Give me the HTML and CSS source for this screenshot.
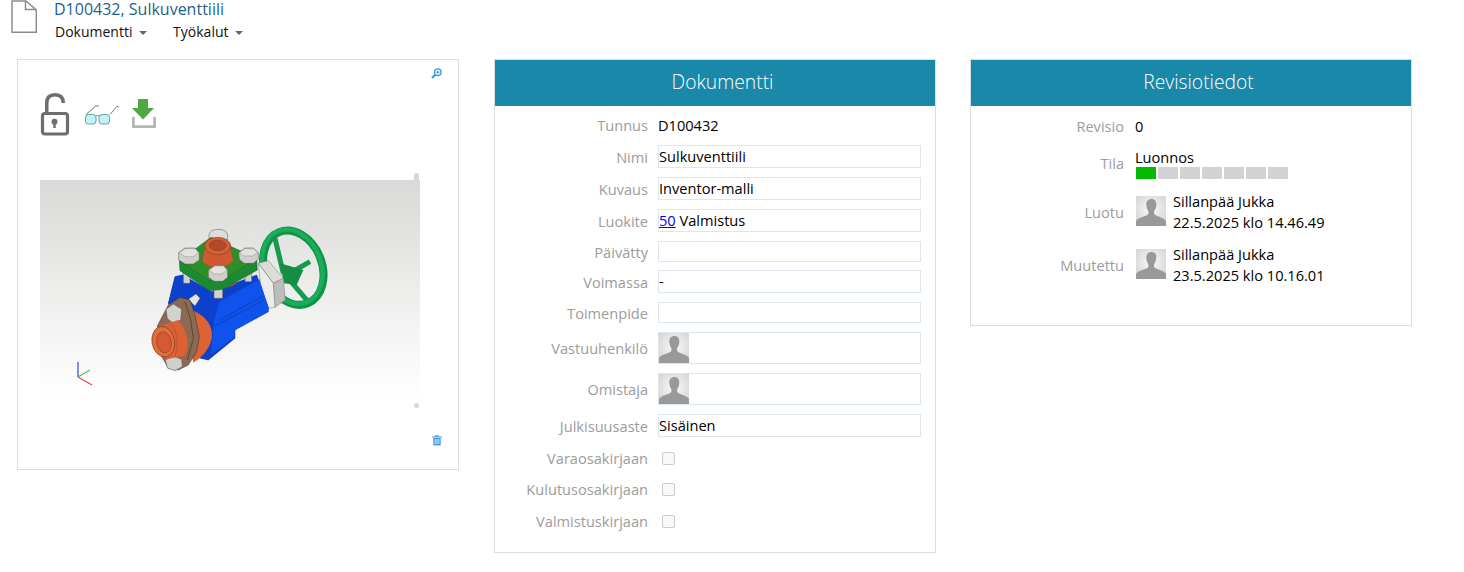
FILE: index.html
```html
<!DOCTYPE html>
<html lang="en">
<head>
  <meta charset="UTF-8" />
  <title>D100432, Sulkuventtiili</title>
  <link rel="stylesheet" href="styles.css">
</head>
<body>

  <svg class="defs">
    <defs>
      <radialGradient id="avatarBg" cx="50%" cy="45%" r="70%">
        <stop offset="0" stop-color="#fafafa"/>
        <stop offset="1" stop-color="#d2d2d2"/>
      </radialGradient>
      <symbol id="avatar" viewBox="0 0 30 30">
        <rect width="30" height="30" fill="url(#avatarBg)"/>
        <path d="M15.500 3c-3.500 0-5.500 2.500-5.200 6 .2 2.500 1 4.500 1.900 6 .5 1 .4 3-.5 3.800-2 1.600-9.700 2.700-11.700 6.200v5h30v-5c-2-3.400-9.200-4.600-11.200-6.200-.9-.8-1-2.800-.5-3.800 1-1.500 1.800-3.500 2-6 .2-3.500-1.300-6-4.800-6z" fill="#999"/>
      </symbol>
    </defs>
  </svg>

  <!-- Header -->
  <div class="page-head">
    <svg class="doc-icon" width="26" height="34" viewBox="0 0 26 34">
      <path d="M1 1v31.300h24.300V10L15 1zM14.500 1v8.500h10.800" fill="#fff" stroke="#8c8c8c" stroke-width="1.500"/>
    </svg>
    <div class="head-text">
      <div class="doc-title">D100432, Sulkuventtiili</div>
      <div class="menu">
        <span class="menu-item">Dokumentti <i class="caret"></i></span>
        <span class="menu-item">Työkalut <i class="caret"></i></span>
      </div>
    </div>
  </div>

  <div class="columns">

    <!-- Preview -->
    <div class="card preview-card">
      <svg class="zoom-icon" width="11" height="11" viewBox="0 0 11 11">
        <circle cx="6.800" cy="4.200" r="3.300" fill="none" stroke="#3f97e0" stroke-width="1.400"/>
        <path d="M4.500 6.500 1 10" stroke="#3f97e0" stroke-width="2.200"/>
        <path d="M5 4.200h3.600M6.800 2.400V6" stroke="#3f97e0" stroke-width="1"/>
      </svg>

      <div class="tools">
        <svg class="lock" width="30" height="43" viewBox="0 0 30 43">
          <path d="M6.750 20V10C6.750 4.500 10 1.750 15 1.750S23.250 4.500 23.250 10" fill="none" stroke="#6e6e6e" stroke-width="3.500"/>
          <rect x="2.500" y="20.500" width="25" height="20.500" rx="2.500" fill="none" stroke="#6e6e6e" stroke-width="3.200"/>
          <circle cx="14.500" cy="28.700" r="3" fill="#6e6e6e"/>
          <path d="M13.300 29h2.400v6h-2.400z" fill="#6e6e6e"/>
        </svg>
        <svg class="glasses" width="36" height="20" viewBox="0 0 36 20">
          <rect x=".5" y="9.500" width="10.500" height="9.500" rx="3" fill="#bff3f8" stroke="#4a8f90" stroke-width=".8"/>
          <rect x="14" y="9.500" width="10.500" height="9.500" rx="3" fill="#bff3f8" stroke="#4a8f90" stroke-width=".8"/>
          <path d="M11 11q1.500-1 3 0M1 9.500 11 .8l3 .2M25 9.500 32 1.300l2 .7" fill="none" stroke="#555" stroke-width=".8"/>
        </svg>
        <svg class="download" width="24" height="30" viewBox="0 0 24 30">
          <path d="M1.300 18v9.700h21.400V18" fill="none" stroke="#b5b5b5" stroke-width="2.800"/>
          <path d="M6 0h10v9h6L11 20.500 0 9h6z" fill="#4ea942"/>
        </svg>
      </div>

      <div class="model">
        <svg width="380" height="220" viewBox="0 0 380 220">
          <defs>
            <linearGradient id="modelBg" x1="0" y1="0" x2="0" y2="1">
              <stop offset="0" stop-color="#d8dad7"/>
              <stop offset=".55" stop-color="#efefee"/>
              <stop offset="1" stop-color="#fff"/>
            </linearGradient>
            <filter id="soft"><feGaussianBlur stdDeviation=".5"/></filter>
          </defs>
          <rect width="380" height="220" fill="url(#modelBg)"/>

          <g filter="url(#soft)">
            <g transform="translate(100 40) scale(.3333)">
              <!-- hand wheel -->
              <path d="M405 55 430 160M510 125 440 165M500 240 440 170" stroke="#169a4e" stroke-width="15" fill="none"/>
              <ellipse cx="460" cy="143" rx="86" ry="115" transform="rotate(-22 460 143)" fill="none" stroke="#0d9447" stroke-width="24"/>
              <ellipse cx="457" cy="140" rx="86" ry="115" transform="rotate(-22 457 140)" fill="none" stroke="#1cab5a" stroke-width="13"/>
              <path d="M420 130 490 150 470 195 432 190z" fill="#128c45"/>
              <!-- packing nut -->
              <path d="M355 130 385 122 430 175 400 190z" fill="#dcdcd9" stroke="#777" stroke-width="1.500"/>
              <path d="M400 190 430 175 436 240 405 262z" fill="#bdbdba" stroke="#777" stroke-width="1.500"/>
              <path d="M355 130 400 190 405 262 385 265 365 225z" fill="#ececea" stroke="#777" stroke-width="1.500"/>
              <!-- body -->
              <path d="M105 170 128 165 215 215 350 165 385 262 385 275 285 330 285 355 205 420 170 412 85 250z" fill="#0a3fc8" stroke="#0a2c90" stroke-width="1.500"/>
              <path d="M238 245 358 178 385 262 385 275 285 330 283 352 212 405 222 300z" fill="#0c52ec"/>
              <path d="M105 170 128 165 215 215 238 245 222 300 212 405 205 420 170 412 85 250z" fill="#0a40cc"/>
              <path d="M225 318 372 240M240 300 368 228" stroke="#07308f" stroke-width="1.500"/>
              <!-- bolt shanks -->
              <path d="M130 155h20v35h-20zM315 150h20v35h-20zM222 185h26v50h-26z" fill="#d2d2d0" stroke="#555" stroke-width="1.500"/>
              <!-- back bolt -->
              <path d="M207 45Q210 28 235 28T263 45V60H207z" fill="#dcdcda" stroke="#555" stroke-width="1.500"/>
              <!-- green flange -->
              <path d="M190 190Q235 225 290 190L280 170H200z" fill="#c9552f"/>
              <path d="M118 122 120 152 208 212 250 208 352 150 350 115 250 178z" fill="#1a8a30" stroke="#155e1d" stroke-width="1.500"/>
              <path d="M118 122 213 52 350 115 250 178 208 182z" fill="#2f8f2a" stroke="#1d6a20" stroke-width="1.500"/>
              <!-- top pipe -->
              <path d="M186 125Q190 100 195 85 232 110 272 85 276 105 281 122 235 165 186 125z" fill="#cf5a31" stroke="#8a3c20" stroke-width="1"/>
              <ellipse cx="233" cy="78" rx="39" ry="26" fill="#d46238" stroke="#8a3c20" stroke-width="2"/>
              <ellipse cx="233" cy="76" rx="26" ry="16" fill="#b14a2a" stroke="#8a3c20" stroke-width="1.500"/>
              <!-- bolt heads -->
              <g fill="#cfcfcc" stroke="#4f4f4f" stroke-width="1.500">
                <path d="M116 98 135 84H165L178 98V120L160 132H135L116 120z"/>
                <path d="M296 98 315 84H340L355 98V118L340 130H312L298 118z"/>
                <path d="M205 150 225 136H250L263 150V172L248 184H222L205 172z"/>
              </g>
              <g fill="#e2e2df" stroke="#6b6b6b" stroke-width="1">
                <path d="M118 98 135 86H165L176 98 160 110H135z"/>
                <path d="M298 98 315 86H340L353 98 338 108H312z"/>
                <path d="M207 150 225 138H250L261 150 246 162H222z"/>
              </g>
              <!-- side bolt -->
              <path d="M145 238 168 222 180 235 165 258z" fill="#e6e6e4" stroke="#666" stroke-width="1.500"/>
              <!-- side pipe, behind the flange -->
              <path d="M160 272Q218 298 216 350 210 395 160 428L140 300z" fill="#dd6336"/>
              <!-- brown flange -->
              <path d="M52 318 85 255 120 232 150 240 165 285 178 350 170 395 145 435 115 450 85 445 60 400z" fill="#8a6a52" stroke="#3d2c20" stroke-width="1.500"/>
              <path d="M135 245 152 300 160 355 142 420" fill="none" stroke="#5c4333" stroke-width="3"/>
              <!-- nuts -->
              <path d="M76 420 100 408 125 418 127 440 105 452 82 444z" fill="#cfcfcc" stroke="#4f4f4f" stroke-width="1.500"/>
              <path d="M78 268 100 252 125 268 122 300 100 310 82 296z" fill="#d2d2cf" stroke="#4f4f4f" stroke-width="1.500"/>
              <!-- pipe end -->
              <path d="M60 318 115 300Q158 350 135 408L75 418z" fill="#dc6236"/>
              <path d="M95 312Q122 350 105 410" fill="none" stroke="#a9482a" stroke-width="2"/>
              <ellipse cx="70" cy="365" rx="34" ry="46" transform="rotate(-10 70 365)" fill="#e26d3c" stroke="#7a3a1f" stroke-width="2"/>
              <ellipse cx="72" cy="367" rx="22" ry="32" transform="rotate(-10 72 367)" fill="#d35a30" stroke="#7a3a1f" stroke-width="1.500"/>
            </g>
          </g>

          <!-- axis triad -->
          <path d="M38 197V182" stroke="#2b46d8" stroke-width="1.200"/>
          <path d="M38 197 50 190" stroke="#4fc04f" stroke-width="1.200"/>
          <path d="M38 197 52 205" stroke="#e04848" stroke-width="1.200"/>
        </svg>
        <span class="grip grip-top"></span>
        <span class="grip grip-bottom"></span>
      </div>

      <svg class="trash-icon" width="10" height="11" viewBox="0 0 10 11">
        <path d="M0 2h10M3.500 2V.7h3V2" fill="none" stroke="#3f97e0" stroke-width="1"/>
        <path d="M1.300 3h7.400v7.400H1.300z" fill="#3f97e0"/>
        <path d="M3.200 4v5M5 4v5M6.800 4v5" stroke="#fff" stroke-width=".8"/>
      </svg>
    </div>

    <!-- Dokumentti -->
    <div class="card doc-card">
      <div class="card-head">Dokumentti</div>
      <div class="form">
        <div class="row row-plain"><label>Tunnus</label><span>D100432</span></div>
        <div class="row"><label>Nimi</label><div class="field">Sulkuventtiili</div></div>
        <div class="row"><label>Kuvaus</label><div class="field">Inventor-malli</div></div>
        <div class="row"><label>Luokite</label><div class="field"><a href="#">50</a> Valmistus</div></div>
        <div class="row row-tight"><label>Päivätty</label><div class="field field-empty"></div></div>
        <div class="row"><label>Voimassa</label><div class="field">-</div></div>
        <div class="row"><label>Toimenpide</label><div class="field field-empty"></div></div>
        <div class="row"><label>Vastuuhenkilö</label><div class="field field-person"><svg class="avatar"><use href="#avatar"/></svg></div></div>
        <div class="row"><label>Omistaja</label><div class="field field-person"><svg class="avatar"><use href="#avatar"/></svg></div></div>
        <div class="row"><label>Julkisuusaste</label><div class="field">Sisäinen</div></div>
        <div class="row row-check"><label>Varaosakirjaan</label><i class="check"></i></div>
        <div class="row row-check"><label>Kulutusosakirjaan</label><i class="check"></i></div>
        <div class="row row-check"><label>Valmistuskirjaan</label><i class="check"></i></div>
      </div>
    </div>

    <!-- Revisiotiedot -->
    <div class="card rev-card">
      <div class="card-head">Revisiotiedot</div>
      <div class="rev-form">
        <div class="rev-row rev-plain"><label>Revisio</label><span>0</span></div>
        <div class="rev-row rev-state">
          <label>Tila</label>
          <div>
            <div class="state-name">Luonnos</div>
            <div class="state-bar">
              <i class="on"></i><i></i><i></i><i></i><i></i><i></i><i></i>
            </div>
          </div>
        </div>
        <div class="rev-row">
          <label>Luotu</label>
          <div class="person">
            <svg class="avatar"><use href="#avatar"/></svg>
            <div>Sillanpää Jukka<br>22.5.2025 klo 14.46.49</div>
          </div>
        </div>
        <div class="rev-row">
          <label>Muutettu</label>
          <div class="person">
            <svg class="avatar"><use href="#avatar"/></svg>
            <div>Sillanpää Jukka<br>23.5.2025 klo 10.16.01</div>
          </div>
        </div>
      </div>
    </div>

  </div>

</body>
</html>
```

FILE: styles.css
```css
body {
  margin: 0;
  font-family: "Open Sans", sans-serif;
  font-size: 14.6px;
  color: #000;
  background: #fff;
  overflow: hidden;
}

.defs {
  position: absolute;
  width: 0;
  height: 0;
}

.page-head {
  display: flex;
  height: 59px;
  padding-left: 11px;
}

.doc-icon {
  flex: none;
  margin-right: 17px;
}

.doc-title {
  font-size: 16px;
  line-height: 18px;
  color: #1f5f8b;
}

.menu {
  display: flex;
  gap: 26px;
  margin-top: 4px;
  padding-left: 1px;
  font-size: 14px;
  line-height: 19px;
  color: #111;
}

.caret {
  display: inline-block;
  width: 0;
  height: 0;
  margin-left: 3px;
  vertical-align: 2px;
  border-top: 4px solid #666;
  border-left: 4px solid transparent;
  border-right: 4px solid transparent;
}

.columns {
  display: flex;
  gap: 35px;
  padding-left: 17px;
  align-items: flex-start;
}

.card {
  width: 442px;
  box-sizing: border-box;
  border: 1px solid #ddd;
  background: #fff;
}

.card-head {
  height: 46px;
  padding-left: 15px;
  background: #1a88a9;
  color: #fff;
  font-size: 19.300px;
  font-weight: 300;
  line-height: 44px;
  text-align: center;
}

/* preview */
.preview-card {
  position: relative;
  height: 411px;
  padding: 33px 0 0 22px;
}

.zoom-icon {
  position: absolute;
  top: 8px;
  right: 16px;
}

.trash-icon {
  position: absolute;
  bottom: 23px;
  right: 16px;
}

.tools {
  display: flex;
  align-items: flex-start;
  height: 43px;
}

.glasses {
  margin: 12px 0 0 15px;
}

.download {
  margin: 6px 0 0 11px;
}

.model {
  position: relative;
  width: 380px;
  height: 220px;
  margin-top: 44px;
}

.model svg {
  display: block;
}

.grip {
  position: absolute;
  right: 1px;
  width: 5px;
  height: 5px;
  border-radius: 3px;
  background: #d8d8d8;
}

.grip-top {
  top: -7px;
  height: 9px;
}

.grip-bottom {
  bottom: -8px;
}

/* document form */
.doc-card {
  height: 494px;
}

.form {
  padding-top: 8px;
}

.row {
  display: flex;
  align-items: center;
  margin-bottom: 9px;
}

.row label {
  width: 153px;
  margin-right: 10px;
  text-align: right;
  color: #9c9c9c;
}

.row-plain {
  height: 22px;
}

.row-tight {
  margin-bottom: 8px;
}

.field {
  box-sizing: border-box;
  width: 263px;
  height: 23px;
  border: 1px solid #dde6ee;
  line-height: 21px;
}

.field a {
  color: #0000ee;
}

.field-empty {
  height: 21px;
}

.field-person {
  height: 32px;
}

.field-person .avatar {
  display: block;
}

.row-check {
  height: 23px;
  margin-bottom: 8.500px;
}

.check {
  box-sizing: border-box;
  width: 13px;
  height: 13px;
  margin: 1px 0 0 4px;
  border: 1px solid #ccc;
  border-radius: 2px;
  background: #f8f8f8;
}

.avatar {
  width: 30px;
  height: 30px;
  flex: none;
}

/* revision */
.rev-card {
  height: 267px;
  margin-left: -1px;
}

.rev-form {
  padding-top: 9px;
}

.rev-row {
  display: flex;
  align-items: center;
  margin-bottom: 11px;
}

.rev-row label {
  width: 153px;
  margin-right: 11px;
  text-align: right;
  color: #9c9c9c;
}

.rev-plain {
  height: 22px;
}

.rev-state {
  margin: -1px 0 12px;
}

.state-name {
  line-height: 20px;
}

.state-bar {
  display: flex;
  gap: 2px;
  margin-left: 1px;
}

.state-bar i {
  width: 20px;
  height: 12px;
  background: #d3d3d3;
}

.state-bar i.on {
  background: #00bb00;
}

.person {
  display: flex;
  gap: 7px;
  line-height: 21px;
}

.person .avatar {
  margin: 5px 0 0 1px;
}
```
